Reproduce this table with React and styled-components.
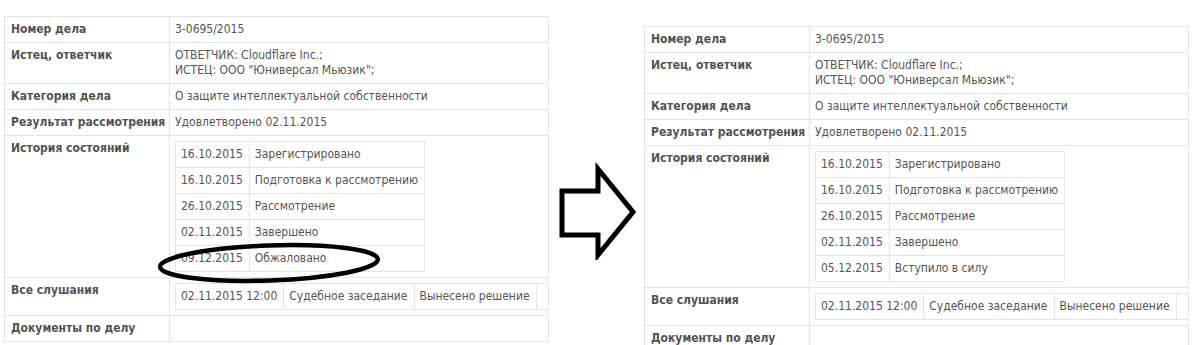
import React from "react";
import styled, { createGlobalStyle } from "styled-components";

const GlobalStyle = createGlobalStyle`
  html, body { margin: 0; padding: 0; background: #fff; }
  body {
    font-family: "DejaVu Sans Condensed", "DejaVu Sans", sans-serif;
    font-size: 12px;
    color: #555;
  }
`;

const Page = styled.div`
  display: flex;
  align-items: flex-start;
  width: 1198px;
  height: 345px;
  overflow: hidden;
`;

const Panel = styled.div`
  position: relative;
  margin-top: ${(p) => p.$top}px;
  margin-left: ${(p) => p.$left}px;
  flex: none;
`;

const CaseTable = styled.table`
  width: 545px;
  border-collapse: collapse;
  table-layout: fixed;
  border: 1px solid #e3e3ea;
`;

const Label = styled.th`
  width: 152px;
  padding: 5px 6px;
  border: 1px solid #e3e3ea;
  text-align: left;
  vertical-align: top;
  font-weight: bold;
  line-height: 15px;
  color: #525252;
  white-space: nowrap;
`;

const Value = styled.td`
  padding: 5px 5px;
  border: 1px solid #e3e3ea;
  vertical-align: top;
  line-height: 15px;
  color: #555;
`;

const SubTable = styled.table`
  border-collapse: collapse;
  border: 1px solid #e3e3ea;
`;

const SubCell = styled.td`
  padding: 5px 6px 5px 5px;
  border: 1px solid #e3e3ea;
  line-height: 15px;
  white-space: nowrap;
  color: #555;
`;

const ArrowSvg = styled.svg`
  flex: none;
  margin-top: 162px;
  margin-left: 8px;
  display: block;
`;

const Ellipse = styled.svg`
  position: absolute;
  left: 146px;
  top: 214px;
  pointer-events: none;
`;

const baseRows = [
  ["Номер дела", "3-0695/2015"],
  ["Истец, ответчик", "ОТВЕТЧИК: Cloudflare Inc.;\nИСТЕЦ: ООО \"Юниверсал Мьюзик\";"],
  ["Категория дела", "О защите интеллектуальной собственности"],
  ["Результат рассмотрения", "Удовлетворено 02.11.2015"],
];

const historyBase = [
  ["16.10.2015", "Зарегистрировано"],
  ["16.10.2015", "Подготовка к рассмотрению"],
  ["26.10.2015", "Рассмотрение"],
  ["02.11.2015", "Завершено"],
];

function Card({ lastState }) {
  const history = [...historyBase, lastState];
  return (
    <CaseTable>
      <tbody>
        {baseRows.map(([l, v]) => (
          <tr key={l}>
            <Label>{l}</Label>
            <Value>
              {v.split("\n").map((line, i) => (
                <div key={i}>{line}</div>
              ))}
            </Value>
          </tr>
        ))}
        <tr>
          <Label>История состояний</Label>
          <Value>
            <SubTable>
              <tbody>
                {history.map(([d, s], i) => (
                  <tr key={i}>
                    <SubCell>{d}</SubCell>
                    <SubCell>{s}</SubCell>
                  </tr>
                ))}
              </tbody>
            </SubTable>
          </Value>
        </tr>
        <tr>
          <Label>Все слушания</Label>
          <Value>
            <SubTable>
              <tbody>
                <tr>
                  <SubCell>02.11.2015 12:00</SubCell>
                  <SubCell>Судебное заседание</SubCell>
                  <SubCell>Вынесено решение</SubCell>
                  <SubCell></SubCell>
                </tr>
              </tbody>
            </SubTable>
          </Value>
        </tr>
        <tr>
          <Label>Документы по делу</Label>
          <Value></Value>
        </tr>
      </tbody>
    </CaseTable>
  );
}

export default function App() {
  return (
    <>
      <GlobalStyle />
      <Page>
        <Panel $top={16} $left={4}>
          <Card lastState={["09.12.2015", "Обжаловано"]} />
          <Ellipse width="240" height="64" viewBox="0 0 240 64">
            <ellipse
              cx="119"
              cy="33"
              rx="109"
              ry="17.5"
              transform="rotate(-2 119 33)"
              fill="none"
              stroke="#000"
              strokeWidth="4.5"
            />
          </Ellipse>
        </Panel>
        <ArrowSvg width="82" height="98" viewBox="0 0 82 98">
          <polygon
            points="5,29 41,29 41,7 76,50 41,93 41,73 5,73"
            fill="#fff"
            stroke="#000"
            strokeWidth="5"
            strokeLinejoin="miter"
          />
        </ArrowSvg>
        <Panel $top={26} $left={5}>
          <Card lastState={["05.12.2015", "Вступило в силу"]} />
        </Panel>
      </Page>
    </>
  );
}
